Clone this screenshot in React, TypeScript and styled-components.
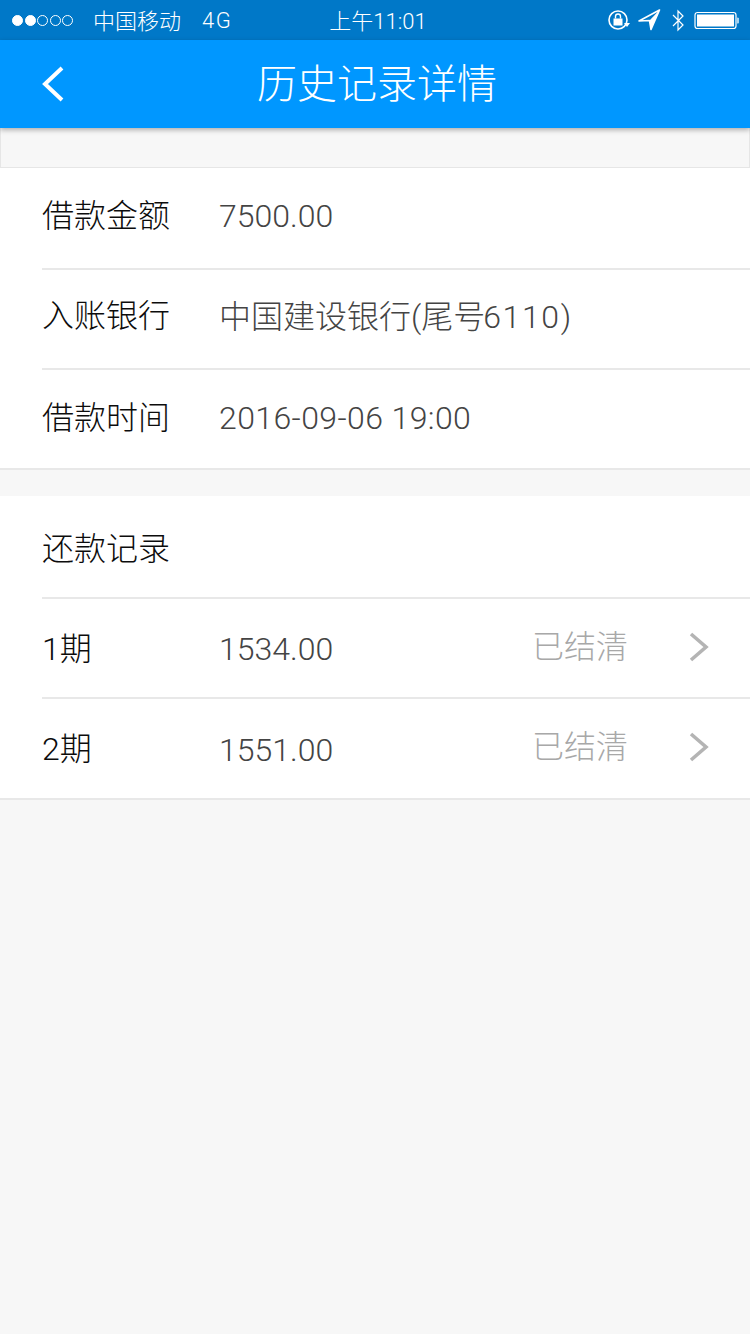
import styled, { createGlobalStyle } from 'styled-components'

const Global = createGlobalStyle`
  html, body {
    margin: 0;
    padding: 0;
    background: #f7f7f7;
  }
`

const font = `Roboto, "Noto Sans CJK SC", sans-serif`

const Page = styled.div`
  width: 750px;
  min-height: 1334px;
  background: #f7f7f7;
  font-family: ${font};
  display: flex;
  flex-direction: column;
`

const StatusBar = styled.div`
  height: 40px;
  background: #0078c8;
  color: #fff;
  display: grid;
  grid-template-columns: 1fr auto 1fr;
  align-items: center;
  padding: 0 12px;
  box-sizing: border-box;
  font-size: 22px;
  font-weight: 300;
`

const StatusLeft = styled.div`
  display: flex;
  align-items: center;
`

const StatusRight = styled.div`
  display: flex;
  align-items: center;
  justify-content: flex-end;
  margin-right: -1px;
`

const Carrier = styled.span`
  margin-left: 20px;
  margin-top: -2px;
`

const Network = styled.span`
  margin-left: 21px;
  letter-spacing: 1.5px;
`

const Clock = styled.div`
  margin-left: 6px;
  margin-top: -3px;
`

const Signal = styled.div`
  display: flex;
  gap: 1.5px;
`

const Dot = styled.span<{ $on?: boolean }>`
  width: 11px;
  height: 11px;
  box-sizing: border-box;
  border-radius: 50%;
  border: 1px solid #fff;
  background: ${(p) => (p.$on ? '#fff' : 'transparent')};
`

const NavBar = styled.div`
  position: relative;
  z-index: 1;
  height: 88px;
  background: #0097ff;
  box-shadow: 0 2px 5px rgba(0, 0, 0, 0.3);
  display: flex;
  align-items: center;
  justify-content: center;
`

const BackIcon = styled.svg`
  position: absolute;
  left: 41px;
  top: 26px;
`

const Title = styled.div`
  color: #fff;
  font-size: 40px;
  font-weight: 300;
  line-height: 88px;
  margin-left: 4px;
  margin-top: 2px;
`

const Spacer = styled.div<{ $h: number; $edge?: boolean }>`
  height: ${(p) => p.$h}px;
  box-sizing: border-box;
  ${(p) => (p.$edge ? 'border: 1px solid #e6e6e6; border-top: 0;' : '')}
`

const Section = styled.section<{ $tail?: number }>`
  background: #fff;
  padding-bottom: ${(p) => p.$tail ?? 0}px;
  border-bottom: 2px solid #e8e8e8;
`

const Row = styled.div<{ $h?: number; $first?: boolean }>`
  height: ${(p) => p.$h ?? 100}px;
  box-sizing: border-box;
  margin-left: 42px;
  display: flex;
  align-items: center;
  ${(p) => (p.$first ? '' : 'border-top: 2px solid #e8e8e8;')}
`

const Label = styled.div<{ $top: number }>`
  width: 177px;
  flex: none;
  font-size: 32px;
  font-weight: 300;
  line-height: 40px;
  margin-top: ${(p) => p.$top}px;
  color: #0c0c0c;
`

const Value = styled.div<{ $top: number }>`
  flex: 1;
  font-size: 32px;
  font-weight: 300;
  line-height: 40px;
  margin-top: ${(p) => p.$top}px;
  color: #444;
`

const TailNumber = styled.span`
  margin-left: -2px;
  letter-spacing: 1.6px;
`

const DateText = styled.span`
  letter-spacing: 0.4px;
`

const Status = styled.div`
  font-size: 32px;
  font-weight: 300;
  line-height: 40px;
  color: #a8a8a8;
  margin-top: -2px;
  margin-right: 61px;
`

const Chevron = styled.svg`
  margin-right: 41px;
  margin-top: -2px;
  flex: none;
`

function Arrow() {
  return (
    <Chevron width="20" height="30" viewBox="0 0 20 30">
      <path d="M2 2 L17 15 L2 28" fill="none" stroke="#b4b4b4" strokeWidth="3.6" />
    </Chevron>
  )
}

const details = [
  { label: '借款金额', labelTop: -4, value: '7500.00', valueTop: -4 },
  {
    label: '入账银行',
    labelTop: -6,
    value: (
      <>
        中国建设银行(尾号<TailNumber>6110)</TailNumber>
      </>
    ),
    valueTop: -4,
  },
  { label: '借款时间', labelTop: -2, value: <DateText>2016-09-06 19:00</DateText>, valueTop: -2 },
]

const records = [
  { label: '1期', value: '1534.00', valueTop: 2 },
  { label: '2期', value: '1551.00', valueTop: 4 },
]

export default function App() {
  return (
    <Page>
      <Global />
      <StatusBar>
        <StatusLeft>
          <Signal>
            <Dot $on />
            <Dot $on />
            <Dot />
            <Dot />
            <Dot />
          </Signal>
          <Carrier>中国移动</Carrier>
          <Network>4G</Network>
        </StatusLeft>
        <Clock>上午11:01</Clock>
        <StatusRight>
          <svg width="132" height="24" viewBox="0 0 132 24">
            <circle cx="11" cy="12" r="9" fill="none" stroke="#fff" strokeWidth="1.6" />
            <path d="M17 15 L23 15 L20 19 Z" fill="#fff" />
            <rect x="6.5" y="10.5" width="9" height="7" fill="#fff" />
            <path d="M8.5 10.5 V8.5 A2.5 2.5 0 0 1 13.5 8.5 V10.5" fill="none" stroke="#fff" strokeWidth="1.4" />
            <path d="M32 13 L52.5 2 L44 21.5 L42.5 12.5 Z" fill="none" stroke="#fff" strokeWidth="1.6" strokeLinejoin="round" />
            <path d="M52.5 2 L44 21.5 L42.5 12.5 Z" fill="#fff" />
            <path d="M66 7 L76 17 L71 22 V3 L76 8 L66 18" fill="none" stroke="#fff" strokeWidth="1.2" />
            <rect x="88" y="4.5" width="41" height="16" rx="2.5" fill="none" stroke="#fff" strokeWidth="1.2" />
            <rect x="90" y="6.5" width="37" height="12" fill="#fff" />
            <path d="M130 9.5 A3 3 0 0 1 130 15.5 Z" fill="#a8d4f0" />
          </svg>
        </StatusRight>
      </StatusBar>
      <NavBar>
        <BackIcon width="24" height="36" viewBox="0 0 24 36">
          <path d="M21 2 L4 18 L21 34" fill="none" stroke="#fff" strokeWidth="4" />
        </BackIcon>
        <Title>历史记录详情</Title>
      </NavBar>
      <Spacer $h={40} $edge />
      <Section>
        {details.map((d, i) => (
          <Row key={d.label} $first={i === 0}>
            <Label $top={d.labelTop}>{d.label}</Label>
            <Value $top={d.valueTop}>{d.value}</Value>
          </Row>
        ))}
      </Section>
      <Spacer $h={26} />
      <Section $tail={1}>
        <Row $first $h={101}>
          <Label $top={4}>还款记录</Label>
        </Row>
        {records.map((r) => (
          <Row key={r.label}>
            <Label $top={2}>{r.label}</Label>
            <Value $top={r.valueTop}>{r.value}</Value>
            <Status>已结清</Status>
            <Arrow />
          </Row>
        ))}
      </Section>
    </Page>
  )
}
